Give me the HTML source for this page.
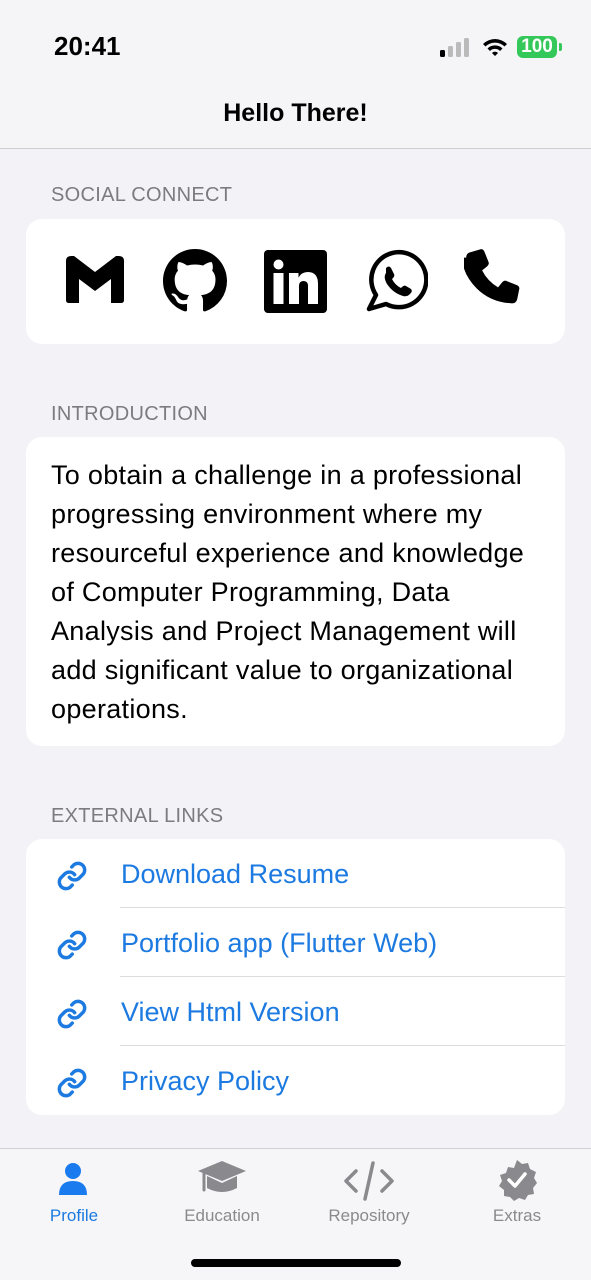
<!DOCTYPE html>
<html><head><meta charset="utf-8"><style>
*{margin:0;padding:0;box-sizing:border-box}
html,body{width:591px;height:1280px;overflow:hidden}
body{background:#f2f2f7;font-family:"Liberation Sans",sans-serif;position:relative}
.hdr{position:absolute;left:0;top:0;width:591px;height:149px;background:#f5f5f7;border-bottom:1px solid #cfcfd3}
.time{position:absolute;left:54px;top:31px;font-size:26px;font-weight:bold;color:#000}
.title{position:absolute;left:0;width:591px;top:99px;text-align:center;font-size:25px;font-weight:bold;color:#000}
.lbl{position:absolute;left:51px;font-size:20px;color:#7c7c80;letter-spacing:.3px}
.card{position:absolute;left:26px;width:539px;background:#fff;border-radius:16px}
.intro{font-size:27px;line-height:39px;color:#000;padding:19px 0 0 25px;white-space:nowrap;letter-spacing:.3px}
.row{position:absolute;left:0;width:539px;height:69px}
.row span{position:absolute;left:95px;top:20px;font-size:27px;color:#1c7ae0}
.row svg{position:absolute;left:30px;top:21px}
.sep{position:absolute;left:94px;right:0;bottom:0;height:1px;background:#ddd}
.tab{position:absolute;top:1148px;left:0;width:591px;height:132px;background:#f6f6f8;border-top:1px solid #d0d0d4}
.ti{position:absolute;top:57px;font-size:17px;color:#8a8a8e;text-align:center;width:120px}
</style></head><body>
<div class="hdr">
<div class="time">20:41</div>
<svg style="position:absolute;left:440px;top:38px" width="32" height="20"><rect x="0" y="12" width="5" height="7" rx="1.5" fill="#000"/><rect x="8" y="8" width="5" height="11" rx="1.5" fill="#bbb"/><rect x="16" y="4" width="5" height="15" rx="1.5" fill="#bbb"/><rect x="24" y="0" width="5" height="19" rx="1.5" fill="#bbb"/></svg>
<svg style="position:absolute;left:481px;top:37px" width="28" height="20" viewBox="0 0 28 20"><path d="M2 7a17 17 0 0 1 24 0l-2.5 2.5a13.5 13.5 0 0 0-19 0z M6.5 11.5a10.5 10.5 0 0 1 15 0l-2.5 2.5a7 7 0 0 0-10 0z M11 16a4 4 0 0 1 6 0l-3 3z" fill="#000"/></svg>
<div style="position:absolute;left:517px;top:36px;width:40px;height:22px;background:#34c759;border-radius:6px;color:#fff;font-size:19px;font-weight:bold;text-align:center;line-height:22px">100</div>
<div style="position:absolute;left:559px;top:43px;width:3px;height:8px;background:#34c759;border-radius:0 2px 2px 0"></div>
<div class="title">Hello There!</div>
</div>

<div class="lbl" style="top:184px">SOCIAL CONNECT</div>
<div class="card" style="top:219px;height:125px">
<svg style="position:absolute;left:37px;top:30px" width="64" height="64" viewBox="0 0 64 64"><path d="M3 12q0-5 5-5h3l21 16 21-16h3q5 0 5 5v39q0 3-3 3h-10v-24l-16 12-16-12v24h-10q-3 0-3-3z" fill="#000"/></svg>
<svg style="position:absolute;left:137px;top:30px" width="64" height="64" viewBox="0 0 16 16"><path fill="#000" d="M8 0C3.58 0 0 3.58 0 8c0 3.54 2.29 6.53 5.47 7.59.4.07.55-.17.55-.38 0-.19-.01-.82-.01-1.49-2.01.37-2.53-.49-2.69-.94-.09-.23-.48-.94-.82-1.13-.28-.15-.68-.52-.01-.53.63-.01 1.08.58 1.23.82.72 1.21 1.87.87 2.33.66.07-.52.28-.87.51-1.070-1.78-.2-3.64-.89-3.64-3.95 0-.87.31-1.59.82-2.15-.08-.2-.36-1.02.08-2.12 0 0 .67-.21 2.2.82.64-.18 1.32-.27 2-.27.68 0 1.36.09 2 .27 1.53-1.04 2.2-.82 2.2-.82.44 1.1.16 1.92.08 2.12.51.56.82 1.27.82 2.15 0 3.07-1.87 3.75-3.65 3.95.29.25.54.73.54 1.48 0 1.07-.01 1.93-.01 2.2 0 .21.15.46.55.38A8.013 8.013 0 0016 8c0-4.42-3.58-8-8-8z"/></svg>
<svg style="position:absolute;left:238px;top:31px" width="63" height="63" viewBox="0 0 63 63"><rect width="63" height="63" rx="4" fill="#000"/><circle cx="14.5" cy="14.5" r="5" fill="#fff"/><rect x="9.5" y="23" width="10" height="31" fill="#fff"/><path d="M25 23h9.5v4.5q3-5.5 9.5-5.5q10 0 10 12v20h-10v-18q0-5-4.5-5t-4.5 5v18h-10z" fill="#fff"/></svg>
<svg style="position:absolute;left:338px;top:30px" width="64" height="64" viewBox="0 0 64 64"><path d="M12 46A27.5 27.5 0 1 1 22 55L5 60z" fill="none" stroke="#000" stroke-width="4.5" stroke-linejoin="round"/><path d="M22 19q3-3 5 0l3 6q1 2-1 4l-1 1q3 6 9 9l1-1q2-2 4-1l5 3q2 2-1 5q-3 3-7 2q-10-3-16-12q-4-7-1-11z" fill="#000"/></svg>
<svg style="position:absolute;left:438px;top:29px" width="66" height="66" viewBox="2 -1 62 62"><path d="M4 8q0-4 4-5l10-3q2 0 3 2l4 10q1 2-1 4l-5 4q5 10 15 16l4-5q2-2 4-1l10 4q2 1 2 3l-2 10q-1 4-5 4q-20-1-33-14t-14-29z" fill="#000"/></svg>
</div>

<div class="lbl" style="top:403px">INTRODUCTION</div>
<div class="card intro" style="top:437px;height:309px">To obtain a challenge in a professional<br>progressing environment where my<br>resourceful experience and knowledge<br>of Computer Programming, Data<br>Analysis and Project Management will<br>add significant value to organizational<br>operations.</div>

<div class="lbl" style="top:805px">EXTERNAL LINKS</div>
<div class="card" style="top:839px;height:276px">
<div class="row" style="top:0"><svg width="32" height="32" viewBox="0 0 24 24" fill="none" stroke="#1c7ae0" stroke-width="2.6" stroke-linecap="round"><path d="M10 13a5 5 0 0 0 7.5.5l3-3a5 5 0 0 0-7-7l-1.7 1.7"/><path d="M14 11a5 5 0 0 0-7.5-.5l-3 3a5 5 0 0 0 7 7l1.7-1.7"/></svg><span>Download Resume</span><div class="sep"></div></div>
<div class="row" style="top:69px"><svg width="32" height="32" viewBox="0 0 24 24" fill="none" stroke="#1c7ae0" stroke-width="2.6" stroke-linecap="round"><path d="M10 13a5 5 0 0 0 7.5.5l3-3a5 5 0 0 0-7-7l-1.7 1.7"/><path d="M14 11a5 5 0 0 0-7.5-.5l-3 3a5 5 0 0 0 7 7l1.7-1.7"/></svg><span>Portfolio app (Flutter Web)</span><div class="sep"></div></div>
<div class="row" style="top:138px"><svg width="32" height="32" viewBox="0 0 24 24" fill="none" stroke="#1c7ae0" stroke-width="2.6" stroke-linecap="round"><path d="M10 13a5 5 0 0 0 7.5.5l3-3a5 5 0 0 0-7-7l-1.7 1.7"/><path d="M14 11a5 5 0 0 0-7.5-.5l-3 3a5 5 0 0 0 7 7l1.7-1.7"/></svg><span>View Html Version</span><div class="sep"></div></div>
<div class="row" style="top:207px"><svg width="32" height="32" viewBox="0 0 24 24" fill="none" stroke="#1c7ae0" stroke-width="2.6" stroke-linecap="round"><path d="M10 13a5 5 0 0 0 7.5.5l3-3a5 5 0 0 0-7-7l-1.7 1.7"/><path d="M14 11a5 5 0 0 0-7.5-.5l-3 3a5 5 0 0 0 7 7l1.7-1.7"/></svg><span>Privacy Policy</span></div>
</div>

<div class="tab">
<svg style="position:absolute;left:56px;top:12px" width="34" height="34" viewBox="0 0 34 34"><circle cx="17" cy="10" r="8" fill="#1a7bef"/><path d="M3 34q0-14 14-14t14 14z" fill="#1a7bef"/></svg>
<svg style="position:absolute;left:196px;top:10px" width="52" height="46" viewBox="0 0 52 46"><path d="M26 2l24 10-24 10-24-10z" fill="#8a8a8e"/><path d="M11 17v12q15 8 30 0v-12l-15 7z" fill="#8a8a8e"/><path d="M8 13v18" stroke="#8a8a8e" stroke-width="3" stroke-linecap="round"/></svg>
<svg style="position:absolute;left:342px;top:12px" width="54" height="40" viewBox="0 0 54 40"><path d="M14 10l-10 10 10 10M40 10l10 10-10 10M31 2l-8 36" fill="none" stroke="#8a8a8e" stroke-width="3.5" stroke-linecap="round" stroke-linejoin="round"/></svg>
<svg style="position:absolute;left:496px;top:10px" width="42" height="42" viewBox="0 0 42 42"><path d="M21 1l5 4 6-1 2 6 6 3-2 6 3 5-4 5 1 6-6 1-3 5-6-2-5 3-4-4-6-1v-6l-5-4 3-5-2-6 6-2 2-6 6 1z" fill="#8a8a8e"/><path d="M13 21l6 6 10-12" fill="none" stroke="#fff" stroke-width="3.5" stroke-linecap="round" stroke-linejoin="round"/></svg>
<div class="ti" style="left:14px;color:#1a7ae0">Profile</div>
<div class="ti" style="left:162px">Education</div>
<div class="ti" style="left:309px">Repository</div>
<div class="ti" style="left:457px">Extras</div>
<div style="position:absolute;left:191px;top:110px;width:210px;height:8px;border-radius:4px;background:#000"></div>
</div>
</body></html>
